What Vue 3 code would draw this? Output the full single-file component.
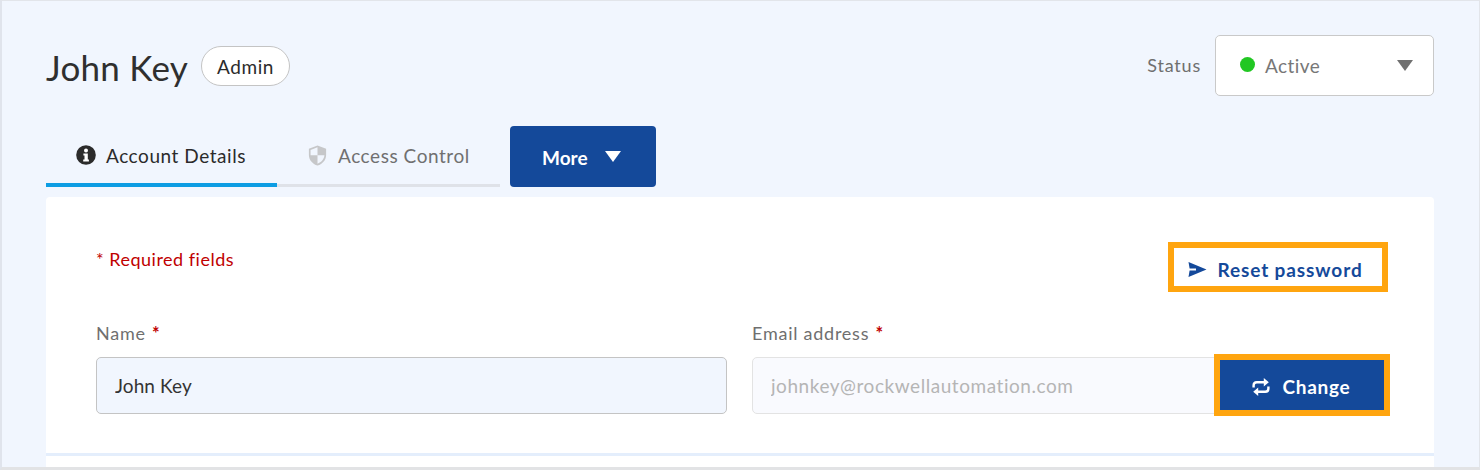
<template>
  <div class="frame">
    <header class="head">
      <div class="who">
        <h1>John Key</h1>
        <span class="role">Admin</span>
      </div>
      <div class="status">
        <span class="status-label">Status</span>
        <div class="select">
          <span class="dot"></span>
          <span class="select-value">Active</span>
          <span class="caret"></span>
        </div>
      </div>
    </header>

    <nav class="tabs">
      <a class="tab tab-active">
        <svg width="20" height="20" viewBox="0 0 20 20">
          <circle cx="10" cy="10" r="9.8" fill="#2b2b2b" />
          <circle cx="10" cy="5.4" r="2" fill="#fff" />
          <path fill="#fff" d="M7.4 8.4h4.4v6.1h1.1v2H7.2v-2h1.3v-4.1H7.4z" />
        </svg>
        Account Details
      </a>
      <a class="tab tab-off">
        <svg width="19" height="21" viewBox="0 0 18 20">
          <path fill="#c6c7c9" d="M9 0.5 17.2 3.6V9.5C17.2 14.4 13.8 18 9 19.6 4.2 18 .8 14.4.8 9.5V3.6z" />
          <path fill="#f1f6fe" d="M9 2.2V9.8H2.4V4.7zM9 9.8H15.6C15.2 13.6 12.6 16.4 9 17.8z" />
        </svg>
        Access Control
      </a>
      <button class="more">
        More
        <span class="more-caret"></span>
      </button>
    </nav>

    <section class="card">
      <div class="top-row">
        <p class="required">* Required fields</p>
        <button class="reset">
          <svg width="19" height="15" viewBox="0 0 19 15">
            <path fill="#14499a" d="M0.5 0 18.5 7.5 0.5 15 1.6 8.4H8V6.6H1.6z" />
          </svg>
          Reset password
        </button>
      </div>
      <div class="fields">
        <div class="field field-name">
          <label>Name <em>*</em></label>
          <input type="text" value="John Key" />
        </div>
        <div class="field field-email">
          <label>Email address <em>*</em></label>
          <div class="email-row">
            <input type="text" disabled value="johnkey@rockwellautomation.com" />
            <button class="change">
              <svg width="18" height="18" viewBox="0 0 18 18" fill="none" stroke="#fff" stroke-width="2.4">
                <path d="M1.6 9.5V7.5C1.6 5.6 3 4.2 4.8 4.2H13.5" />
                <path d="M16.4 8.5V10.5C16.4 12.4 15 13.8 13.2 13.8H4.5" />
                <path fill="#fff" stroke="none" d="M11.8 0 16.8 4.2 11.8 8.4zM6.2 9.6 1.2 13.8 6.2 18z" />
              </svg>
              Change
            </button>
          </div>
        </div>
      </div>
      <div class="rule"></div>
    </section>
  </div>
</template>

<script setup>
</script>

<style>
body {
  margin: 0;
}
</style>

<style scoped>
.frame {
  box-sizing: border-box;
  width: 1480px;
  height: 470px;
  overflow: hidden;
  padding: 0 45px 0 44px;
  background: #f1f6fe;
  border-top: 1px solid #e2e5ea;
  border-left: 2px solid #e0e4ec;
  border-right: 1px solid #e2e5ea;
  border-bottom: 3px solid #e2e3e5;
  font-family: "Lato", "Liberation Sans", sans-serif;
  color: #2b2b2b;
}

.head {
  display: flex;
  justify-content: space-between;
  align-items: center;
  height: 61px;
  margin-top: 34px;
}

.who {
  display: flex;
  align-items: center;
  gap: 13px;
}

h1 {
  margin: 2px 0 0;
  font-size: 35px;
  font-weight: 400;
  letter-spacing: 0.25px;
  color: #2f2f2f;
}

.role {
  box-sizing: border-box;
  height: 40px;
  width: 89px;
  margin-top: 1px;
  display: flex;
  align-items: center;
  justify-content: center;
  background: #fff;
  border: 1px solid #c4c4c4;
  border-radius: 20px;
  font-size: 19px;
  letter-spacing: 0.6px;
}

.status {
  display: flex;
  align-items: center;
  gap: 14px;
}

.status-label {
  margin-top: -2px;
  font-size: 18px;
  letter-spacing: 0.8px;
  color: #6f6f6f;
}

.select {
  box-sizing: border-box;
  width: 219px;
  height: 61px;
  display: flex;
  align-items: center;
  padding: 0 20px 0 24px;
  background: #fff;
  border: 1px solid #c9c9c9;
  border-radius: 5px;
}

.dot {
  width: 15px;
  height: 15px;
  border-radius: 50%;
  background: #22c723;
  margin-right: 10px;
  margin-top: -2px;
}

.select-value {
  flex: 1;
  font-size: 19px;
  letter-spacing: 0.45px;
  color: #777;
}

.caret {
  width: 0;
  height: 0;
  border-left: 8px solid transparent;
  border-right: 8px solid transparent;
  border-top: 11px solid #707070;
}

.tabs {
  display: flex;
  align-items: flex-end;
  margin-top: 30px;
  height: 61px;
}

.tab {
  box-sizing: border-box;
  height: 60px;
  display: flex;
  align-items: center;
  font-size: 19px;
  letter-spacing: 0.55px;
}

.tab svg {
  margin-right: 10px;
}

.tab-active {
  width: 231px;
  padding-left: 30px;
  border-bottom: 4px solid #0d9de3;
  color: #2b2b2b;
}

.tab-off {
  width: 223px;
  padding-left: 31px;
  border-bottom: 3px solid #dfe2e8;
  color: #707070;
}

.tab-off svg {
  margin-right: 11px;
}

.more {
  box-sizing: border-box;
  width: 146px;
  height: 61px;
  margin-left: 10px;
  display: flex;
  align-items: center;
  gap: 17px;
  padding: 2px 0 0 32px;
  background: #14499a;
  border: none;
  border-radius: 4px;
  color: #fff;
  font-family: inherit;
  font-size: 19px;
  font-weight: 700;
  letter-spacing: 0;
}

.more-caret {
  width: 0;
  height: 0;
  border-left: 8px solid transparent;
  border-right: 8px solid transparent;
  border-top: 11px solid #fff;
  margin-top: -3px;
}

.card {
  margin-top: 10px;
  padding: 45px 44px 0 50px;
  background: #fff;
  border-radius: 4px 4px 0 0;
  height: 280px;
  box-sizing: border-box;
}

.top-row {
  display: flex;
  justify-content: space-between;
  align-items: flex-start;
}

.required {
  margin: 6px 0 0;
  font-size: 18px;
  letter-spacing: 0.5px;
  color: #c00000;
}

.reset {
  box-sizing: border-box;
  width: 220px;
  height: 50px;
  margin-right: 2px;
  padding: 4px 5px 0 0;
  display: flex;
  align-items: center;
  justify-content: center;
  gap: 10px;
  background: #fff;
  border: 6px solid #ffa50f;
  color: #14499a;
  font-family: inherit;
  font-size: 19px;
  font-weight: 700;
  letter-spacing: 0.9px;
}

.fields {
  display: flex;
  margin-top: 30px;
}

.field label {
  display: block;
  height: 24px;
  margin-bottom: 11px;
  font-size: 18px;
  line-height: 22px;
  letter-spacing: 0.75px;
  color: #6f6f6f;
}

.field em {
  font-style: normal;
  font-weight: 700;
  margin-left: 1px;
  color: #c00000;
}

.field input {
  box-sizing: border-box;
  height: 57px;
  padding: 0 18px;
  border-radius: 5px;
  font-family: inherit;
  font-size: 19px;
  letter-spacing: 0.55px;
}

.field-name {
  width: 631px;
}

.field-name input {
  width: 100%;
  background: #f1f6fe;
  border: 1px solid #c4c4c4;
  color: #333;
  letter-spacing: 0.1px;
}

.field-email {
  margin-left: 25px;
}

.email-row {
  display: flex;
  align-items: center;
}

.email-row input {
  width: 470px;
  background: #f9fafe;
  border: 1px solid #e3e3e3;
  color: #b5b5b5;
  opacity: 1;
}

.change {
  box-sizing: border-box;
  width: 176px;
  height: 62px;
  margin: -3px 0 -2px -8px;
  padding: 3px 2px 0 0;
  position: relative;
  display: flex;
  align-items: center;
  justify-content: center;
  gap: 13px;
  background: #14499a;
  border: 6px solid #ffa50f;
  color: #fff;
  font-family: inherit;
  font-size: 19px;
  font-weight: 700;
  letter-spacing: 0.7px;
}

.rule {
  height: 3px;
  margin: 39px -44px 0 -50px;
  background: #e4eefc;
}
</style>
